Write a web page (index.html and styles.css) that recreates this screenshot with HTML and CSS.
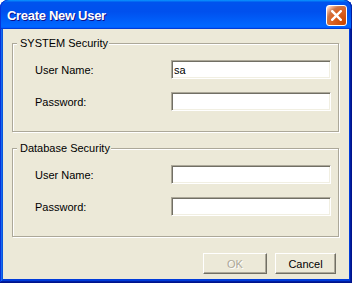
FILE: index.html
```html
<!DOCTYPE html>
<html>
<head>
<meta charset="utf-8">
<link rel="stylesheet" href="styles.css">
</head>
<body>
<div class="window">
  <div class="titlebar">
    <span class="title">Create New User</span>
    <button class="close" aria-label="Close">
      <svg width="11" height="11" viewBox="0 0 11 11"><path d="M1.2 1.2 L9.8 9.8 M9.8 1.2 L1.2 9.8" stroke="#fff" stroke-width="2.4" stroke-linecap="square" fill="none"/></svg>
    </button>
  </div>
  <div class="body">
    <fieldset class="group">
      <legend>SYSTEM Security</legend>
      <div class="row"><label>User Name:</label><input class="field" type="text" value="sa"></div>
      <div class="row"><label>Password:</label><input class="field" type="password" value=""></div>
    </fieldset>
    <fieldset class="group">
      <legend>Database Security</legend>
      <div class="row"><label>User Name:</label><input class="field" type="text" value=""></div>
      <div class="row"><label>Password:</label><input class="field" type="password" value=""></div>
    </fieldset>
    <div class="actions">
      <button class="btn btn-ok" disabled>OK</button>
      <button class="btn btn-cancel">Cancel</button>
    </div>
  </div>
</div>
</body>
</html>
```
FILE: styles.css
```css
html, body {
  margin: 0;
  background: #ffffff;
}
body {
  font-family: "Liberation Sans", Arial, sans-serif;
  font-size: 11px;
  color: #000;
}
.window {
  width: 352px;
  height: 283px;
  box-sizing: border-box;
  background: #ECE9D8;
  border-radius: 8px 8px 0 0;
  padding: 0 3px 4px;
  display: flex;
  flex-direction: column;
  overflow: hidden;
  box-shadow:
    inset -1px -1px #00138c,
    inset 1px 1px #0831d9,
    inset -2px -2px #001ea0,
    inset 2px 2px #166aee,
    inset -3px -3px #003bda,
    inset 3px 3px #0855dd,
    inset 0 -4px #003bda;
}
.titlebar {
  flex: none;
  height: 29px;
  margin: 0 -3px;
  display: flex;
  align-items: flex-start;
  border-radius: 8px 8px 0 0;
  background: linear-gradient(180deg, #0997ff, #0053ee 8%, #0050ee 40%, #0066ff 88%, #0066ff 93%, #005bff 95%, #003dd7 96%, #003dd7);
  box-shadow: inset 1px 0 #0831d9, inset -1px 0 #001ea0;
}
.title {
  color: #fff;
  font-weight: bold;
  font-size: 13px;
  line-height: 14px;
  margin: 9px 0 0 7px;
  letter-spacing: -0.3px;
  text-shadow: 1px 1px #0f1089;
}
.close {
  margin: 5px 5px 0 auto;
  width: 21px;
  height: 21px;
  box-sizing: border-box;
  padding: 0;
  border: 1px solid #fff;
  border-radius: 3px;
  background: radial-gradient(circle at 90% 90%, #cc4600 0%, #dc6527 55%, #cd7546 70%, #ffccb2 90%, #fff 100%);
  display: flex;
  align-items: center;
  justify-content: center;
}
.close svg {
  display: block;
}
.body {
  flex: 1;
  padding: 8px 9px 0;
  display: flex;
  flex-direction: column;
}
.group {
  margin: 0;
  padding: 0 0 20px;
  width: 327px;
  box-sizing: border-box;
  min-inline-size: 0;
  border: 1px solid #ACA899;
  box-shadow: inset 1px 1px #fff, 1px 1px #fff;
}
.group + .group {
  margin-top: 10px;
}
.group legend {
  margin-left: 4px;
  padding: 0 1px 0 3px;
  line-height: 13px;
  background: #ECE9D8;
}
.row {
  display: grid;
  grid-template-columns: 136px 160px;
  align-items: center;
  padding-left: 22px;
  margin-top: 13px;
}
.group legend + .row {
  margin-top: 10px;
}
.field {
  width: 160px;
  height: 19px;
  box-sizing: border-box;
  margin: 0;
  padding: 0 2px;
  font-family: "Liberation Sans", Arial, sans-serif;
  font-size: 11px;
  color: #000;
  background: #fff;
  border: 1px solid;
  border-color: #ACA899 #fff #fff #ACA899;
  box-shadow: inset 1px 1px #716F64, inset -1px -1px #F1EFE2;
  outline: none;
}
.actions {
  display: flex;
  justify-content: flex-end;
  gap: 8px;
  margin-top: 16px;
  padding-right: 4px;
}
.btn {
  height: 21px;
  box-sizing: border-box;
  margin: 0;
  padding: 0;
  font-family: "Liberation Sans", Arial, sans-serif;
  font-size: 11px;
  color: #000;
  background: #ECE9D8;
  border: 1px solid;
  border-color: #fff #716F64 #716F64 #fff;
  box-shadow: inset -1px -1px #ACA899;
}
.btn-ok {
  width: 64px;
}
.btn-cancel {
  width: 61px;
}
.btn:disabled {
  color: #ACA899;
  text-shadow: 1px 1px #fff;
}
```
